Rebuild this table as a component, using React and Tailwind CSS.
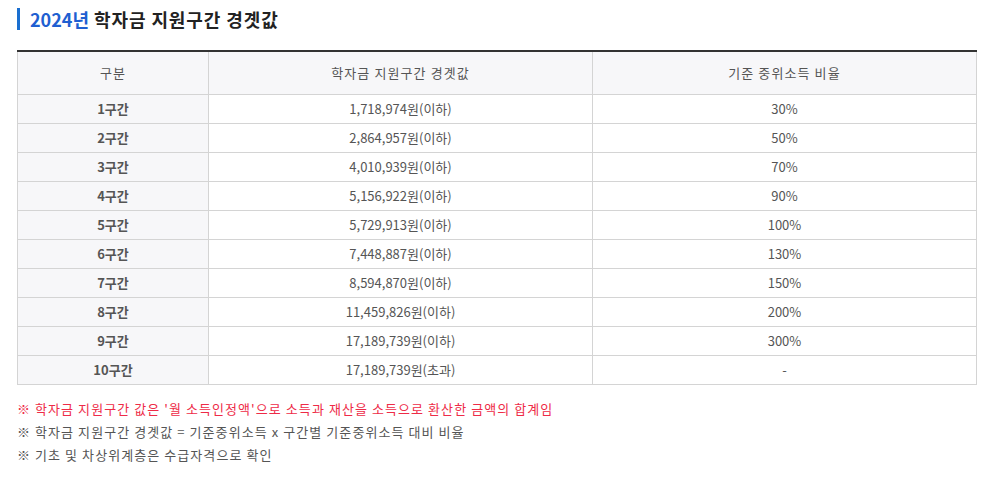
const rows = [
  ['1구간', '1,718,974원(이하)', '30%'],
  ['2구간', '2,864,957원(이하)', '50%'],
  ['3구간', '4,010,939원(이하)', '70%'],
  ['4구간', '5,156,922원(이하)', '90%'],
  ['5구간', '5,729,913원(이하)', '100%'],
  ['6구간', '7,448,887원(이하)', '130%'],
  ['7구간', '8,594,870원(이하)', '150%'],
  ['8구간', '11,459,826원(이하)', '200%'],
  ['9구간', '17,189,739원(이하)', '300%'],
  ['10구간', '17,189,739원(초과)', '-'],
];

export default function App() {
  return (
    <div
      className="bg-white w-[994px] h-[481px] pl-[17px] pr-[17px] pt-[8px]"
      style={{ fontFamily: '"Noto Sans CJK KR", "Noto Sans", sans-serif' }}
    >
      <h2 className="flex items-center h-[22px] border-l-[3px] border-[#1a6fd0] pl-[10px] text-[18px] font-bold tracking-[0.9px] text-[#222]">
        <span className="text-[#1f5fd1] tracking-[0px]">2024년</span>&nbsp;학자금 지원구간 경곗값
      </h2>

      <table className="mt-[20px] w-[960px] border-collapse table-fixed text-[13px] text-[#555] border-t-[2px] border-t-[#333]">
        <colgroup>
          <col className="w-[191px]" />
          <col className="w-[384px]" />
          <col />
        </colgroup>
        <thead>
          <tr className="h-[43px] bg-[#f7f7f9] tracking-[1.1px]">
            <th className="border border-[#d4d4d4] border-t-0 font-normal">구분</th>
            <th className="border border-[#d4d4d4] border-t-0 font-normal">학자금 지원구간 경곗값</th>
            <th className="border border-[#d4d4d4] border-t-0 font-normal">기준 중위소득 비율</th>
          </tr>
        </thead>
        <tbody>
          {rows.map((r) => (
            <tr key={r[0]} className="h-[29px]">
              <td className="border border-[#d4d4d4] bg-[#f7f7f9] text-center font-bold">{r[0]}</td>
              <td className="border border-[#d4d4d4] text-center">{r[1]}</td>
              <td className="border border-[#d4d4d4] text-center">{r[2]}</td>
            </tr>
          ))}
        </tbody>
      </table>

      <ul className="mt-[12px] text-[13px] leading-[23px] text-[#555] tracking-[1.07px]">
        <li className="text-[#ee2b47]">※ 학자금 지원구간 값은 '월 소득인정액'으로 소득과 재산을 소득으로 환산한 금액의 합계임</li>
        <li>※ 학자금 지원구간 경곗값 = 기준중위소득 x 구간별 기준중위소득 대비 비율</li>
        <li>※ 기초 및 차상위계층은 수급자격으로 확인</li>
      </ul>
    </div>
  );
}
